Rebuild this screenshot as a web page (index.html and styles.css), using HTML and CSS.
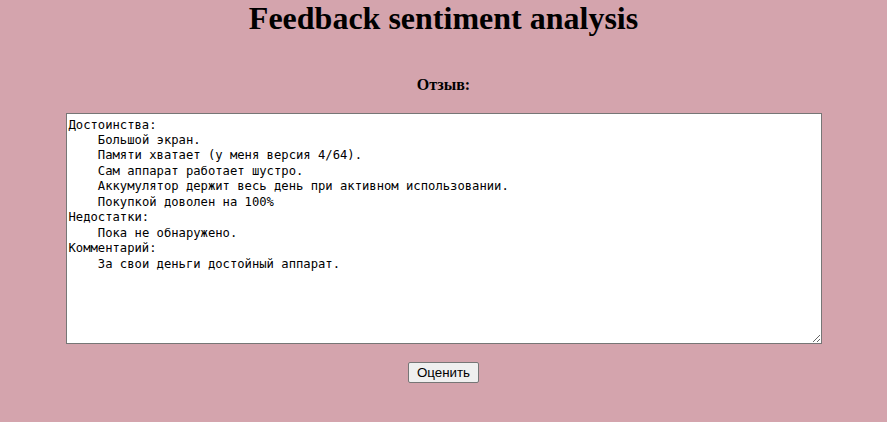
FILE: index.html
```html
<!DOCTYPE html>
<html lang="ru">
<head>
<meta charset="utf-8">
<title>Feedback sentiment analysis</title>
<link rel="stylesheet" href="styles.css">
</head>
<body>
<main class="page">
  <h1 class="title">Feedback sentiment analysis</h1>
  <form class="form">
    <label class="label" for="review">Отзыв:</label>
    <textarea class="review" id="review">Достоинства:
    Большой экран.
    Памяти хватает (у меня версия 4/64).
    Сам аппарат работает шустро.
    Аккумулятор держит весь день при активном использовании.
    Покупкой доволен на 100%
Недостатки:
    Пока не обнаружено.
Комментарий:
    За свои деньги достойный аппарат.</textarea>
    <button class="submit" type="button">Оценить</button>
  </form>
</main>
</body>
</html>
```
FILE: styles.css
```css
html, body {
  margin: 0;
  padding: 0;
}
body {
  background: #d4a4ad;
  font-family: "Liberation Serif", "Times New Roman", serif;
  color: #000;
}
.page {
  display: flex;
  flex-direction: column;
  align-items: center;
}
.title {
  margin: 0;
  font-size: 32px;
  line-height: 37px;
  font-weight: bold;
  text-align: center;
}
.form {
  display: flex;
  flex-direction: column;
  align-items: center;
  margin-top: 39px;
}
.label {
  font-weight: bold;
  font-size: 16px;
  line-height: 18px;
}
.review {
  box-sizing: border-box;
  width: 756px;
  height: 231px;
  margin: 19px 0 0 0;
  padding: 3.5px 2px 0 2px;
  border: 1px solid #767676;
  background: #fff;
  font-family: "DejaVu Sans Mono", "Liberation Mono", monospace;
  font-size: 12.2px;
  line-height: 15.45px;
  color: #000;
  resize: both;
}
.submit {
  box-sizing: border-box;
  margin-top: 18px;
  height: 21px;
  padding: 1px 7.5px;
  border: 1px solid #767676;
  border-radius: 2px;
  background: #efefef;
  font-family: "Liberation Sans", Arial, sans-serif;
  font-size: 13.33px;
  color: #000;
}
```
